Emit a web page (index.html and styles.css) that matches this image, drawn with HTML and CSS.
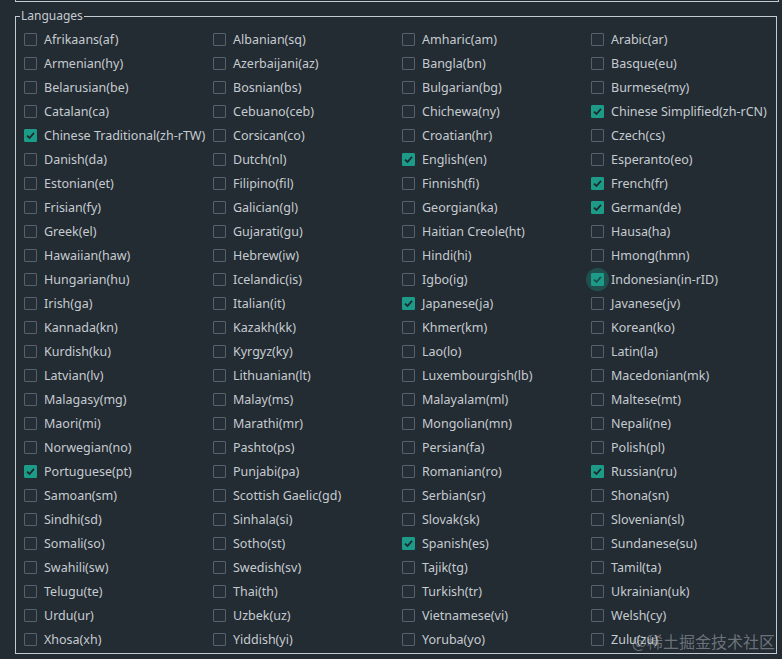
FILE: index.html
```html
<!DOCTYPE html>
<html lang="en">
<head>
<meta charset="utf-8">
<link rel="stylesheet" href="styles.css">
</head>
<body>
<div class="prev-panel"></div>
<fieldset class="group">
  <legend class="group-title">Languages</legend>
  <div class="lang-grid">
    <label class="opt"><span class="box"></span>Afrikaans(af)</label>
    <label class="opt"><span class="box"></span>Albanian(sq)</label>
    <label class="opt"><span class="box"></span>Amharic(am)</label>
    <label class="opt"><span class="box"></span>Arabic(ar)</label>
    <label class="opt"><span class="box"></span>Armenian(hy)</label>
    <label class="opt"><span class="box"></span>Azerbaijani(az)</label>
    <label class="opt"><span class="box"></span>Bangla(bn)</label>
    <label class="opt"><span class="box"></span>Basque(eu)</label>
    <label class="opt"><span class="box"></span>Belarusian(be)</label>
    <label class="opt"><span class="box"></span>Bosnian(bs)</label>
    <label class="opt"><span class="box"></span>Bulgarian(bg)</label>
    <label class="opt"><span class="box"></span>Burmese(my)</label>
    <label class="opt"><span class="box"></span>Catalan(ca)</label>
    <label class="opt"><span class="box"></span>Cebuano(ceb)</label>
    <label class="opt"><span class="box"></span>Chichewa(ny)</label>
    <label class="opt"><span class="box checked"><svg viewBox="0 0 13 13"><path d="M3 6.6 L5.5 9 L10 3.8"/></svg></span>Chinese Simplified(zh-rCN)</label>
    <label class="opt"><span class="box checked"><svg viewBox="0 0 13 13"><path d="M3 6.6 L5.5 9 L10 3.8"/></svg></span>Chinese Traditional(zh-rTW)</label>
    <label class="opt"><span class="box"></span>Corsican(co)</label>
    <label class="opt"><span class="box"></span>Croatian(hr)</label>
    <label class="opt"><span class="box"></span>Czech(cs)</label>
    <label class="opt"><span class="box"></span>Danish(da)</label>
    <label class="opt"><span class="box"></span>Dutch(nl)</label>
    <label class="opt"><span class="box checked"><svg viewBox="0 0 13 13"><path d="M3 6.6 L5.5 9 L10 3.8"/></svg></span>English(en)</label>
    <label class="opt"><span class="box"></span>Esperanto(eo)</label>
    <label class="opt"><span class="box"></span>Estonian(et)</label>
    <label class="opt"><span class="box"></span>Filipino(fil)</label>
    <label class="opt"><span class="box"></span>Finnish(fi)</label>
    <label class="opt"><span class="box checked"><svg viewBox="0 0 13 13"><path d="M3 6.6 L5.5 9 L10 3.8"/></svg></span>French(fr)</label>
    <label class="opt"><span class="box"></span>Frisian(fy)</label>
    <label class="opt"><span class="box"></span>Galician(gl)</label>
    <label class="opt"><span class="box"></span>Georgian(ka)</label>
    <label class="opt"><span class="box checked"><svg viewBox="0 0 13 13"><path d="M3 6.6 L5.5 9 L10 3.8"/></svg></span>German(de)</label>
    <label class="opt"><span class="box"></span>Greek(el)</label>
    <label class="opt"><span class="box"></span>Gujarati(gu)</label>
    <label class="opt"><span class="box"></span>Haitian Creole(ht)</label>
    <label class="opt"><span class="box"></span>Hausa(ha)</label>
    <label class="opt"><span class="box"></span>Hawaiian(haw)</label>
    <label class="opt"><span class="box"></span>Hebrew(iw)</label>
    <label class="opt"><span class="box"></span>Hindi(hi)</label>
    <label class="opt"><span class="box"></span>Hmong(hmn)</label>
    <label class="opt"><span class="box"></span>Hungarian(hu)</label>
    <label class="opt"><span class="box"></span>Icelandic(is)</label>
    <label class="opt"><span class="box"></span>Igbo(ig)</label>
    <label class="opt"><span class="box checked hover"><svg viewBox="0 0 13 13"><path d="M3 6.6 L5.5 9 L10 3.8"/></svg></span>Indonesian(in-rID)</label>
    <label class="opt"><span class="box"></span>Irish(ga)</label>
    <label class="opt"><span class="box"></span>Italian(it)</label>
    <label class="opt"><span class="box checked"><svg viewBox="0 0 13 13"><path d="M3 6.6 L5.5 9 L10 3.8"/></svg></span>Japanese(ja)</label>
    <label class="opt"><span class="box"></span>Javanese(jv)</label>
    <label class="opt"><span class="box"></span>Kannada(kn)</label>
    <label class="opt"><span class="box"></span>Kazakh(kk)</label>
    <label class="opt"><span class="box"></span>Khmer(km)</label>
    <label class="opt"><span class="box"></span>Korean(ko)</label>
    <label class="opt"><span class="box"></span>Kurdish(ku)</label>
    <label class="opt"><span class="box"></span>Kyrgyz(ky)</label>
    <label class="opt"><span class="box"></span>Lao(lo)</label>
    <label class="opt"><span class="box"></span>Latin(la)</label>
    <label class="opt"><span class="box"></span>Latvian(lv)</label>
    <label class="opt"><span class="box"></span>Lithuanian(lt)</label>
    <label class="opt"><span class="box"></span>Luxembourgish(lb)</label>
    <label class="opt"><span class="box"></span>Macedonian(mk)</label>
    <label class="opt"><span class="box"></span>Malagasy(mg)</label>
    <label class="opt"><span class="box"></span>Malay(ms)</label>
    <label class="opt"><span class="box"></span>Malayalam(ml)</label>
    <label class="opt"><span class="box"></span>Maltese(mt)</label>
    <label class="opt"><span class="box"></span>Maori(mi)</label>
    <label class="opt"><span class="box"></span>Marathi(mr)</label>
    <label class="opt"><span class="box"></span>Mongolian(mn)</label>
    <label class="opt"><span class="box"></span>Nepali(ne)</label>
    <label class="opt"><span class="box"></span>Norwegian(no)</label>
    <label class="opt"><span class="box"></span>Pashto(ps)</label>
    <label class="opt"><span class="box"></span>Persian(fa)</label>
    <label class="opt"><span class="box"></span>Polish(pl)</label>
    <label class="opt"><span class="box checked"><svg viewBox="0 0 13 13"><path d="M3 6.6 L5.5 9 L10 3.8"/></svg></span>Portuguese(pt)</label>
    <label class="opt"><span class="box"></span>Punjabi(pa)</label>
    <label class="opt"><span class="box"></span>Romanian(ro)</label>
    <label class="opt"><span class="box checked"><svg viewBox="0 0 13 13"><path d="M3 6.6 L5.5 9 L10 3.8"/></svg></span>Russian(ru)</label>
    <label class="opt"><span class="box"></span>Samoan(sm)</label>
    <label class="opt"><span class="box"></span>Scottish Gaelic(gd)</label>
    <label class="opt"><span class="box"></span>Serbian(sr)</label>
    <label class="opt"><span class="box"></span>Shona(sn)</label>
    <label class="opt"><span class="box"></span>Sindhi(sd)</label>
    <label class="opt"><span class="box"></span>Sinhala(si)</label>
    <label class="opt"><span class="box"></span>Slovak(sk)</label>
    <label class="opt"><span class="box"></span>Slovenian(sl)</label>
    <label class="opt"><span class="box"></span>Somali(so)</label>
    <label class="opt"><span class="box"></span>Sotho(st)</label>
    <label class="opt"><span class="box checked"><svg viewBox="0 0 13 13"><path d="M3 6.6 L5.5 9 L10 3.8"/></svg></span>Spanish(es)</label>
    <label class="opt"><span class="box"></span>Sundanese(su)</label>
    <label class="opt"><span class="box"></span>Swahili(sw)</label>
    <label class="opt"><span class="box"></span>Swedish(sv)</label>
    <label class="opt"><span class="box"></span>Tajik(tg)</label>
    <label class="opt"><span class="box"></span>Tamil(ta)</label>
    <label class="opt"><span class="box"></span>Telugu(te)</label>
    <label class="opt"><span class="box"></span>Thai(th)</label>
    <label class="opt"><span class="box"></span>Turkish(tr)</label>
    <label class="opt"><span class="box"></span>Ukrainian(uk)</label>
    <label class="opt"><span class="box"></span>Urdu(ur)</label>
    <label class="opt"><span class="box"></span>Uzbek(uz)</label>
    <label class="opt"><span class="box"></span>Vietnamese(vi)</label>
    <label class="opt"><span class="box"></span>Welsh(cy)</label>
    <label class="opt"><span class="box"></span>Xhosa(xh)</label>
    <label class="opt"><span class="box"></span>Yiddish(yi)</label>
    <label class="opt"><span class="box"></span>Yoruba(yo)</label>
    <label class="opt"><span class="box"></span>Zulu(zu)</label>
  </div>
</fieldset>
<div class="watermark">@稀土掘金技术社区</div>
</body>
</html>
```
FILE: styles.css
```css
html, body {
  margin: 0;
  padding: 0;
  background: #232b33;
}
body {
  width: 782px;
  height: 659px;
  position: relative;
  overflow: hidden;
  font-family: "Noto Sans", "Noto Sans CJK SC", sans-serif;
  color: #c6cbd0;
}
.prev-panel {
  height: 1px;
  margin: 0 3px 0 15px;
  border: 1px solid #c3cad1;
  border-top: none;
}
.group {
  margin: 6px 0 0 15px;
  width: 762px;
  box-sizing: border-box;
  padding: 3px 0 2px 0;
  border: 1px solid #c3cad1;
  min-width: 0;
}
.group-title {
  font-size: 12px;
  line-height: 16px;
  padding: 0 1px;
  margin-left: 4px;
  color: #c6cbd0;
}
.lang-grid {
  display: grid;
  grid-template-columns: repeat(4, 189px);
  grid-auto-rows: 24px;
  padding-left: 8px;
}
.opt {
  display: flex;
  align-items: center;
  gap: 7px;
  font-size: 12.5px;
  white-space: nowrap;
}
.box {
  position: relative;
  width: 13px;
  height: 13px;
  box-sizing: border-box;
  border: 1px solid #56616b;
  background: #252e36;
  border-radius: 1px;
  flex: none;
  display: flex;
}
.box svg {
  width: 13px;
  height: 13px;
  margin: -1px;
}
.box svg path {
  fill: none;
  stroke: #1c2a2f;
  stroke-width: 1.8;
}
.box.checked {
  background: #1c9c88;
  border-color: #1c9c88;
}
.box.hover::before {
  content: "";
  position: absolute;
  left: -6px;
  top: -6px;
  width: 23px;
  height: 23px;
  border-radius: 50%;
  background: rgba(28, 156, 136, 0.32);
}
.watermark {
  position: absolute;
  right: 7px;
  bottom: 8px;
  font-family: "Noto Sans CJK SC", sans-serif;
  font-size: 16px;
  line-height: 20px;
  color: rgba(200, 205, 210, 0.45);
}
```
